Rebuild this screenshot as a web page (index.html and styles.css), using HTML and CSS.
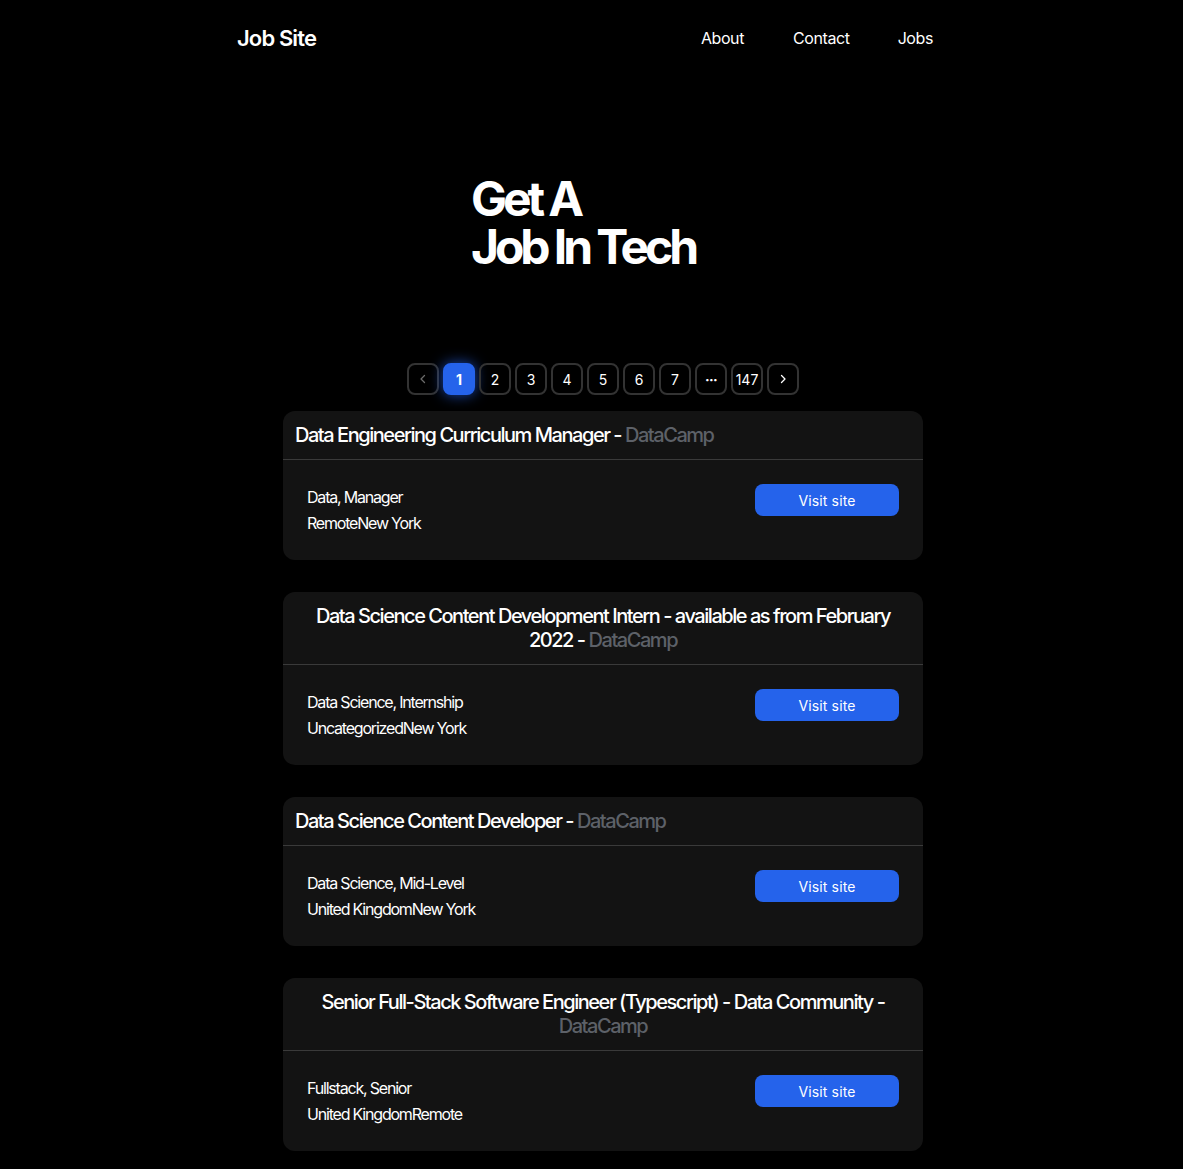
FILE: index.html
```html
<!DOCTYPE html>
<html lang="en">
<head>
<meta charset="utf-8">
<title>Job Site</title>
<link rel="stylesheet" href="styles.css">
</head>
<body>
<header class="topbar">
  <a class="brand" href="#">Job Site</a>
  <nav class="nav">
    <a href="#">About</a>
    <a href="#">Contact</a>
    <a href="#">Jobs</a>
  </nav>
</header>

<section class="hero">
  <h1>Get A<br>Job In Tech</h1>
</section>

<main class="jobs">
  <div class="pager">
    <button class="pg pg-dim" aria-label="Previous"><svg width="10" height="10" viewBox="0 0 10 10"><path d="M6.5 1.5 3 5l3.5 3.5" fill="none" stroke="currentColor" stroke-width="1.3" stroke-linecap="round" stroke-linejoin="round"/></svg></button>
    <button class="pg pg-active">1</button>
    <button class="pg">2</button>
    <button class="pg">3</button>
    <button class="pg">4</button>
    <button class="pg">5</button>
    <button class="pg">6</button>
    <button class="pg">7</button>
    <button class="pg pg-dots">···</button>
    <button class="pg">147</button>
    <button class="pg" aria-label="Next"><svg width="10" height="10" viewBox="0 0 10 10"><path d="M3.5 1.5 7 5 3.5 8.5" fill="none" stroke="currentColor" stroke-width="1.3" stroke-linecap="round" stroke-linejoin="round"/></svg></button>
  </div>

  <article class="card">
    <div class="card-head"><h2>Data Engineering Curriculum Manager - <span class="co">DataCamp</span></h2></div>
    <div class="card-body">
      <div class="meta"><p>Data, Manager</p><p>RemoteNew York</p></div>
      <a class="visit" href="#">Visit site</a>
    </div>
  </article>

  <article class="card">
    <div class="card-head"><h2>Data Science Content Development Intern - available as from February 2022 - <span class="co">DataCamp</span></h2></div>
    <div class="card-body">
      <div class="meta"><p>Data Science, Internship</p><p>UncategorizedNew York</p></div>
      <a class="visit" href="#">Visit site</a>
    </div>
  </article>

  <article class="card">
    <div class="card-head"><h2>Data Science Content Developer - <span class="co">DataCamp</span></h2></div>
    <div class="card-body">
      <div class="meta"><p>Data Science, Mid-Level</p><p>United KingdomNew York</p></div>
      <a class="visit" href="#">Visit site</a>
    </div>
  </article>

  <article class="card">
    <div class="card-head"><h2>Senior Full-Stack Software Engineer (Typescript) - Data Community - <span class="co">DataCamp</span></h2></div>
    <div class="card-body">
      <div class="meta"><p>Fullstack, Senior</p><p>United KingdomRemote</p></div>
      <a class="visit" href="#">Visit site</a>
    </div>
  </article>
</main>
</body>
</html>
```

FILE: styles.css
```css
* { box-sizing: border-box; }
html, body { margin: 0; padding: 0; background: #000; }
body {
  font-family: Inter, "Noto Sans", sans-serif;
  color: #fff;
  width: 1183px;
}
a { color: inherit; text-decoration: none; }

.topbar {
  display: flex;
  justify-content: space-between;
  align-items: center;
  width: 696px;
  margin-left: 237px;
  height: 76px;
}
.brand {
  font-size: 22px;
  font-weight: 600;
  letter-spacing: -0.04em;
}
.nav {
  display: flex;
  gap: 48px;
  font-size: 16px;
  letter-spacing: -0.025em;
}
.nav a:first-child { margin-right: 1px; }

.hero {
  margin-left: 471px;
  padding-top: 99px;
}
.hero h1 {
  margin: 0;
  font-size: 48px;
  line-height: 48px;
  font-weight: 700;
  letter-spacing: -0.085em;
}

.jobs {
  margin-left: 283px;
  width: 640px;
  padding-top: 92px;
  padding-bottom: 40px;
  display: flex;
  flex-direction: column;
  gap: 32px;
}
.pager {
  display: flex;
  justify-content: center;
  gap: 4px;
  margin-bottom: -16px;
}
.pg {
  width: 32px;
  height: 32px;
  border: 2px solid #333;
  border-radius: 8px;
  background: transparent;
  color: #fff;
  font-family: Inter, sans-serif;
  font-size: 14px;
  display: flex;
  align-items: center;
  justify-content: center;
  padding: 0;
}
.pg-dim { color: #6b6b6b; }
.pg-active {
  background: #2563eb;
  border-color: #2563eb;
  font-weight: 700;
  box-shadow: 0 0 14px rgba(37, 99, 235, 0.75);
}
.pg-dots { font-weight: 700; letter-spacing: -0.05em; }

.card {
  background: #131313;
  border-radius: 12px;
  overflow: hidden;
}
.card-head {
  display: flex;
  padding: 12px;
  border-bottom: 1px solid #3a3a3a;
}
.card-head h2 {
  margin: 0;
  font-size: 20px;
  line-height: 24px;
  font-weight: 500;
  letter-spacing: -0.073em;
  text-align: center;
}
.co { color: #5d6168; }
.card-body {
  display: flex;
  justify-content: space-between;
  align-items: flex-start;
  padding: 24px;
}
.meta p {
  margin: 0;
  font-size: 16px;
  line-height: 26px;
  letter-spacing: -0.075em;
}
.visit {
  width: 144px;
  height: 32px;
  border-radius: 8px;
  background: #2563eb;
  font-size: 14px;
  display: flex;
  align-items: center;
  justify-content: center;
  letter-spacing: 0.01em;
}
```
